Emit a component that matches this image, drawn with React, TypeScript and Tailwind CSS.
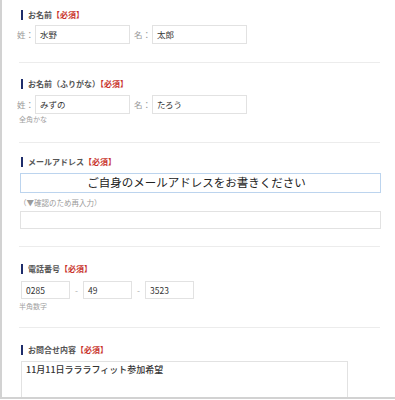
const FONT = "font-['Noto_Sans_CJK_JP','Noto_Sans',sans-serif]";

function Label({ text }: { text: string }) {
  return (
    <div className="flex items-center h-[10px]">
      <span className="w-[2px] h-[10px] bg-[#1e2d6b] ml-[2px]" />
      <span className="ml-[5px] text-[8px] leading-[10px] font-bold text-[#555]">
        {text}
        <span className="text-[#c8322b]">【必須】</span>
      </span>
    </div>
  );
}

function Box({ className, children }: { className: string; children?: React.ReactNode }) {
  return (
    <div
      className={`border border-[#e2e2e2] bg-white flex items-center pl-[4px] text-[8.5px] text-[#333] ${className}`}
    >
      {children}
    </div>
  );
}

function NameRow({ sei, mei }: { sei: string; mei: string }) {
  return (
    <div className="flex items-center ml-[-2px] text-[8.5px]">
      <span className="w-[18px] text-[#9a9a9a]">姓：</span>
      <Box className="w-[95px] h-[19px]">{sei}</Box>
      <span className="w-[18px] ml-[4px] text-[#9a9a9a]">名：</span>
      <Box className="w-[95px] h-[19px]">{mei}</Box>
    </div>
  );
}

function Hint({ text }: { text: string }) {
  return <div className="text-[7px] leading-[9px] text-[#a0a0a0]">{text}</div>;
}

const Divider = () => <div className="h-px bg-[#ececec] w-[361px]" />;

export default function App() {
  return (
    <div className={`w-[395px] h-[400px] bg-white overflow-hidden ${FONT}`}>
      <div className="h-[399px] border-l-2 border-b-2 border-[#d2d2d2] overflow-hidden pl-[17px]">
        {/* お名前 */}
        <div className="pt-[10px]">
          <Label text="お名前" />
          <div className="mt-[5px]">
            <NameRow sei="水野" mei="太郎" />
          </div>
        </div>
        <div className="mt-[18px]">
          <Divider />
        </div>

        {/* ふりがな */}
        <div className="pt-[16px]">
          <Label text="お名前（ふりがな）" />
          <div className="mt-[6px]">
            <NameRow sei="みずの" mei="たろう" />
          </div>
          <div className="mt-[1px]">
            <Hint text="全角かな" />
          </div>
        </div>
        <div className="mt-[18px]">
          <Divider />
        </div>

        {/* メールアドレス */}
        <div className="pt-[14px]">
          <Label text="メールアドレス" />
          <div className="mt-[6px] ml-[1px] w-[361px] h-[20px] border border-[#bcd4ee] flex items-center justify-center pr-[8px] text-[11.5px] text-[#222]">
            ご自身のメールアドレスをお書きください
          </div>
          <div className="mt-[5px] text-[7.5px] leading-[9px] text-[#9a9a9a]">（▼確認のため再入力）</div>
          <div className="mt-[4px] ml-[1px] w-[361px] h-[18px] border border-[#e2e2e2]" />
        </div>
        <div className="mt-[17px]">
          <Divider />
        </div>

        {/* 電話番号 */}
        <div className="pt-[17px]">
          <Label text="電話番号" />
          <div className="mt-[7px] ml-[2px] flex items-center text-[8.5px]">
            <Box className="w-[49px] h-[18px]">0285</Box>
            <span className="w-[13px] text-center text-[#aaa]">-</span>
            <Box className="w-[49px] h-[18px]">49</Box>
            <span className="w-[13px] text-center text-[#aaa]">-</span>
            <Box className="w-[49px] h-[18px]">3523</Box>
          </div>
          <div className="mt-[3px]">
            <Hint text="半角数字" />
          </div>
        </div>
        <div className="mt-[16px]">
          <Divider />
        </div>

        {/* お問合せ内容 */}
        <div className="pt-[17px]">
          <Label text="お問合せ内容" />
          <div className="mt-[6px] ml-[2px] w-[327px] h-[40px] border border-[#e2e2e2] px-[4px] pt-[1px] text-[9px] text-[#333] font-medium">
            11月11日ラララフィット参加希望
          </div>
        </div>
      </div>
    </div>
  );
}
